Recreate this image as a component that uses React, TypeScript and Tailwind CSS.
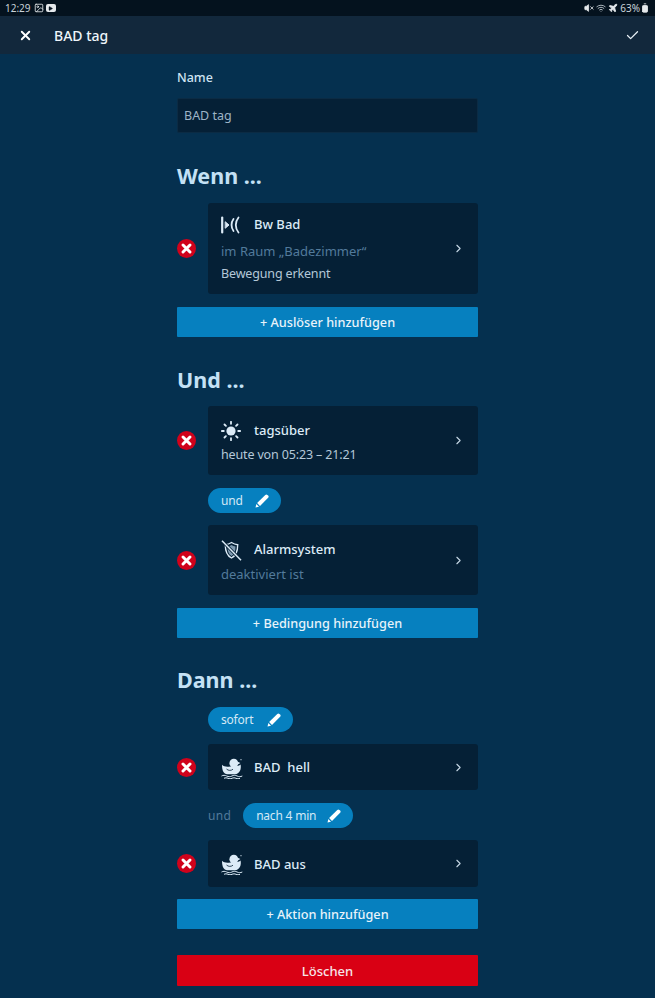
import React from "react";
import { X, Check, ChevronRight, Image as ImageIcon, Play, VolumeX, Wifi, Plane, BatteryFull } from "lucide-react";

const font = { fontFamily: '"Noto Sans", sans-serif' };

function Remove() {
  return (
    <div className="w-[31px] shrink-0 flex">
      <svg width="19" height="19" viewBox="0 0 19 19">
        <circle cx="9.5" cy="9.5" r="9.5" fill="#d0021b" />
        <path d="M6 6l7 7M13 6l-7 7" stroke="#fff" strokeWidth="3" strokeLinecap="round" />
      </svg>
    </div>
  );
}

function PencilSolid() {
  return (
    <svg width="14" height="14" viewBox="0 0 14 14" fill="#ffffff">
      <path d="M10.300.9a1.500 1.500 0 0 1 2.100 0l.7.7a1.500 1.500 0 0 1 0 2.100L5 11.900 2.100 9z" />
      <path d="M1.400 10l2.600 2.700L.5 13.500z" />
    </svg>
  );
}

function Duck() {
  return (
    <svg width="22" height="21" viewBox="0 0 22 21" fill="#dcebf7">
      <circle cx="12.800" cy="5.200" r="4.400" />
      <path d="M16.800 3.700l2.600 1.300-2.600 1.400z" />
      <circle cx="20" cy="1.700" r="0.600" />
      <path d="M1 6.800c2 2 5 2.400 8.400 1.600l6.500-.4c1.600-.1 2.900-.6 3.700-1.500 1 4.800-1.100 9.500-5.600 9.800H6.200C2.900 16.300 1 12.800 1 6.800z" />
      <path d="M5.500 11c1.800 1.800 4.700 1.800 6.500.2" stroke="#052036" strokeWidth="0.800" fill="none" />
      <path d="M0.500 18c1.700-.9 3.400-.9 5.200 0s3.400.9 5.200 0 3.400-.9 5.200 0 3.400.9 5.200 0M3 20.300c1.300-.6 2.700-.6 4 0s2.700.6 4 0 2.700-.6 4 0 2.700.6 4 0" stroke="#dcebf7" strokeWidth="1" fill="none" />
    </svg>
  );
}

function Motion() {
  return (
    <svg width="20" height="18" viewBox="0 0 20 18" fill="none" stroke="#dcebf7" strokeWidth="1.800" strokeLinecap="round">
      <path d="M1.200 1.500v15" strokeWidth="2.200" />
      <path d="M4.500 6l3.500 3-3.500 3z" fill="#dcebf7" strokeWidth="1" />
      <path d="M12.500 3c-2.600 3.500-2.600 8.500 0 12" />
      <path d="M17.500 1.500c-3.600 4.500-3.600 10.500 0 15" />
    </svg>
  );
}

function Sun() {
  return (
    <svg width="20" height="20" viewBox="0 0 20 20" stroke="#dcebf7" strokeWidth="1.800" strokeLinecap="round">
      <circle cx="10" cy="10" r="4.600" fill="#dcebf7" stroke="none" />
      <path d="M10 .8v2M10 17.200v2M.8 10h2M17.200 10h2M3.500 3.500l1.400 1.400M15.100 15.100l1.400 1.400M3.500 16.500l1.400-1.400M15.100 4.900l1.400-1.400" />
    </svg>
  );
}

function Shield() {
  return (
    <svg width="21" height="21" viewBox="0 0 21 21" fill="none" stroke="#dcebf7" strokeWidth="1.400">
      <path d="M10.500 2.500c2 1.300 4 2 6.200 2.200 0 6.300-1.400 10.800-6.200 13.300C5.700 15.500 4.300 11 4.300 4.700 6.500 4.500 8.500 3.800 10.500 2.500z" />
      <path d="M10.500 5c1.300.8 2.600 1.200 4 1.500 0 4.500-1 7.800-4 9.600-3-1.800-4-5.100-4-9.600 1.400-.3 2.700-.7 4-1.500z" fill="#7f9bb1" stroke="none" />
      <path d="M1 .8l19 19.400" stroke="#052036" strokeWidth="3" />
      <path d="M1 .8l19 19.400" strokeWidth="1.500" />
    </svg>
  );
}

function Card({ icon, title, lines, className, pad = "pt-[2px]", lineGap = "" }: { icon: React.ReactNode; title: string; lines?: { text: string; dim?: boolean; gap?: string }[]; className: string; pad?: string; lineGap?: string }) {
  return (
    <div className={`flex-1 flex items-center rounded-[3px] bg-[#052036] pl-[13px] pr-[13px] ${className}`}>
      <div className={`flex-1 flex flex-col ${pad}`}>
        <div className="flex items-center h-[24px]">
          <div className="w-[33px] shrink-0 flex items-center">{icon}</div>
          <span className="text-[13px] font-medium text-[#dcebf7] whitespace-pre">{title}</span>
        </div>
        {lines?.map((l) => (
          <div key={l.text} className={`h-[23px] flex items-center ${l.gap ?? lineGap} ${l.dim ? "text-[13px] text-[#527a9b]" : "text-[12.5px] tracking-[-0.15px] text-[#b4c8d8]"}`}>
            {l.text}
          </div>
        ))}
      </div>
      <ChevronRight size={13} strokeWidth={2} className="text-[#c5d6e4]" />
    </div>
  );
}

function Row({ children, className = "" }: { children: React.ReactNode; className?: string }) {
  return <div className={`flex items-center ${className}`}><Remove />{children}</div>;
}

function Pill({ label, className = "" }: { label: string; className?: string }) {
  return (
    <div className={`h-[25px] rounded-full bg-[#0680bf] flex items-center justify-between pl-[13px] pr-[12px] text-[12px] tracking-[-0.2px] text-[#d4e9f6] ${className}`}>
      <span>{label}</span>
      <PencilSolid />
    </div>
  );
}

function Btn({ label, className = "" }: { label: string; className?: string }) {
  return (
    <div className={`h-[30px] pt-[2px] rounded-[1px] bg-[#0680bf] flex items-center justify-center text-[12.700px] font-medium text-[#e8f3fa] ${className}`}>
      {label}
    </div>
  );
}

function Heading({ label, className = "" }: { label: string; className?: string }) {
  return <div className={`text-[21.500px] leading-[28px] font-bold text-[#c4e1f5] ${className}`}>{label}</div>;
}

export default function App() {
  return (
    <div style={font} className="w-[655px] h-[998px] overflow-hidden bg-[#05304f] flex flex-col">
      <div className="h-[16px] bg-[#04121e] flex items-center justify-between px-[5px] text-[10px] text-[#c9d2d9]">
        <div className="flex items-center gap-[2px]">
          <span className="mr-[1px]">12:29</span>
          <ImageIcon size={10} className="text-[#e5e9ec]" />
          <span className="w-[10px] h-[8px] rounded-[2px] bg-[#e5e9ec] flex items-center justify-center"><Play size={5} fill="#04121e" className="text-[#04121e]" /></span>
        </div>
        <div className="flex items-center gap-[2px]">
          <VolumeX size={10} fill="#e5e9ec" className="text-[#e5e9ec]" />
          <Wifi size={10} className="text-[#c9d2d9]" />
          <Plane size={10} className="text-[#e5e9ec]" fill="#e5e9ec" />
          <span>63%</span>
          <BatteryFull size={10} fill="#e5e9ec" className="text-[#e5e9ec] -rotate-90 -ml-[2px]" />
        </div>
      </div>
      <div className="h-[38px] bg-[#12283c] flex items-center pl-[18px] pr-[15px]">
        <X size={15} strokeWidth={3} className="text-white" />
        <span className="ml-[21px] flex-1 text-[14px] font-medium text-[#eef5fa]">BAD tag</span>
        <Check size={15} strokeWidth={2} className="text-[#e8f0f6]" />
      </div>
      <div className="w-[301px] ml-[177px] flex flex-col">
        <div className="mt-[15px] h-[18px] flex items-center text-[12.500px] font-medium text-[#cfe3f2]">Name</div>
        <div className="mt-[11px] h-[35px] pt-[2px] flex items-center px-[6px] rounded-[2px] bg-[#052036] border border-[#0b2b44] text-[12.500px] text-[#9db4c6]">BAD tag</div>

        <Heading label="Wenn ..." className="mt-[29px]" />
        <Row className="mt-[13px]">
          <Card className="h-[91px]" icon={<Motion />} title="Bw Bad" lines={[{ text: "im Raum „Badezimmer“", dim: true, gap: "mt-[3px]" }, { text: "Bewegung erkennt" }]} />
        </Row>
        <Btn label="+ Auslöser hinzufügen" className="mt-[13px]" />

        <Heading label="Und ..." className="mt-[29px]" />
        <Row className="mt-[12px]">
          <Card className="h-[69px]" pad="pt-[4px]" lineGap="mt-[1px]" icon={<Sun />} title="tagsüber" lines={[{ text: "heute von 05:23 – 21:21" }]} />
        </Row>
        <div className="mt-[13px] ml-[31px]"><Pill label="und" className="w-[73px]" /></div>
        <Row className="mt-[12px]">
          <Card className="h-[70px]" pad="pt-[4px]" lineGap="mt-[1px]" icon={<Shield />} title="Alarmsystem" lines={[{ text: "deaktiviert ist", dim: true }]} />
        </Row>
        <Btn label="+ Bedingung hinzufügen" className="mt-[13px]" />

        <Heading label="Dann ..." className="mt-[28px]" />
        <div className="mt-[13px] ml-[31px]"><Pill label="sofort" className="w-[85px]" /></div>
        <Row className="mt-[12px]">
          <Card className="h-[46px]" icon={<Duck />} title="BAD  hell" />
        </Row>
        <div className="mt-[13px] ml-[31px] flex items-center gap-[12px]">
          <span className="text-[12px] text-[#527a9b] tracking-[0.3px]">und</span>
          <Pill label="nach 4 min" className="w-[110px]" />
        </div>
        <Row className="mt-[12px]">
          <Card className="h-[47px]" icon={<Duck />} title="BAD aus" />
        </Row>
        <Btn label="+ Aktion hinzufügen" className="mt-[12px]" />
        <div className="mt-[26px] h-[31px] pt-[2px] rounded-[1px] bg-[#d90014] flex items-center justify-center text-[13px] font-medium text-[#f6e6e8]">Löschen</div>
      </div>
    </div>
  );
}
